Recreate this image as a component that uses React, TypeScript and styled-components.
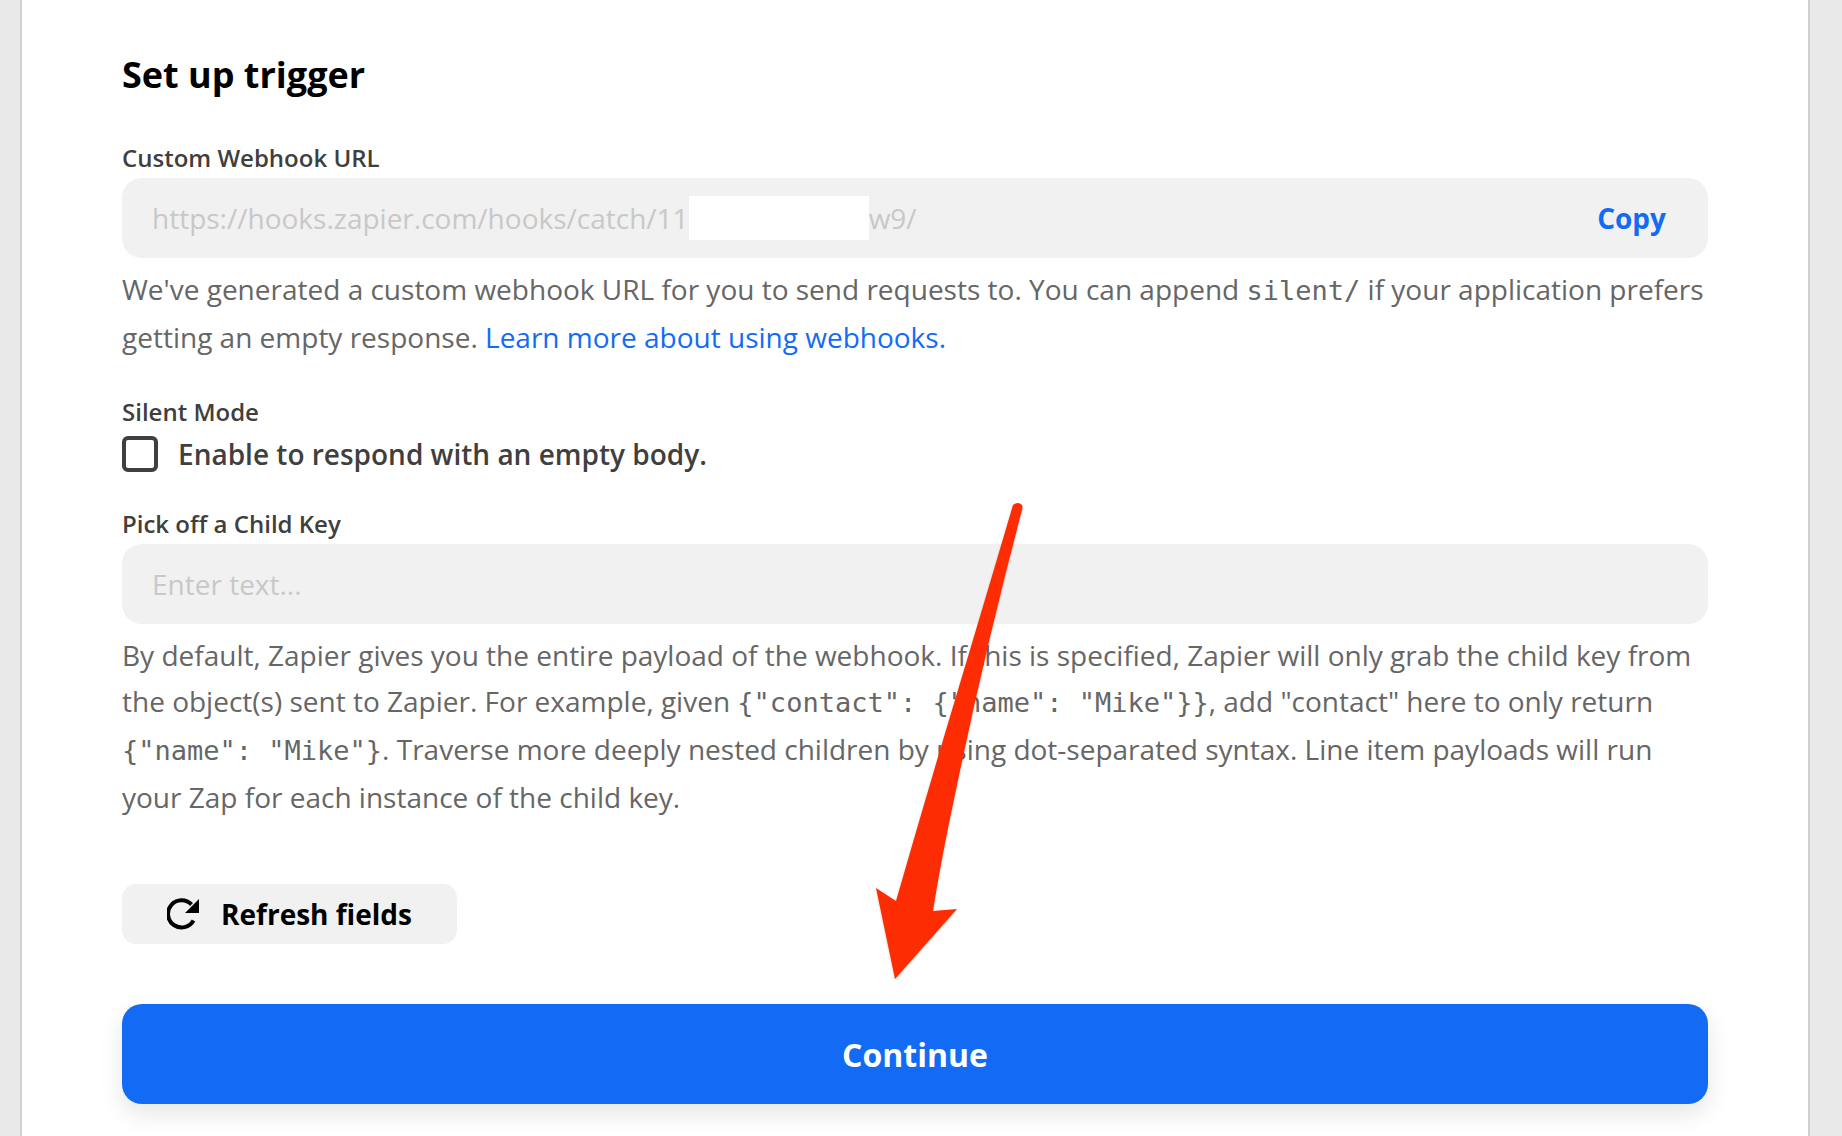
import React from "react";
import styled, { createGlobalStyle } from "styled-components";

const Global = createGlobalStyle`
  html, body { margin: 0; padding: 0; height: 100%; overflow: hidden; background: #e9e9e9; }
  body { font-family: "Open Sans", "Liberation Sans", sans-serif; }
  * { box-sizing: border-box; }
`;

const Page = styled.div`
  position: relative;
  height: 1136px;
  padding: 0 32px 0 20px;
  overflow: hidden;
`;

const Panel = styled.main`
  height: 1136px;
  background: #fff;
  border-left: 2px solid #d0d0d0;
  border-right: 2px solid #d0d0d0;
  padding: 50px 100px 0 100px;
  display: flex;
  flex-direction: column;
`;

const Heading = styled.h1`
  margin: 0 0 42px;
  font-size: 36px;
  line-height: 50px;
  font-weight: 700;
  color: #000;
`;

const Label = styled.div`
  font-size: 24px;
  line-height: 32px;
  font-weight: 600;
  color: #403f3e;
`;

const Field = styled.div`
  display: flex;
  align-items: center;
  justify-content: space-between;
  height: 80px;
  margin-top: 4px;
  padding: 0 42px 0 30px;
  background: #f1f1f1;
  border-radius: 20px;
`;

const FieldText = styled.div`
  display: flex;
  align-items: center;
  font-size: 28px;
  color: #c8c8c8;
`;

const Redaction = styled.span`
  display: block;
  width: 180px;
  height: 44px;
  background: #fff;
`;

const CopyLink = styled.span`
  font-size: 28px;
  font-weight: 700;
  color: #136bf5;
`;

const Help = styled.p`
  margin: 8px 0 0;
  font-size: 28px;
  line-height: 46px;
  color: #666;
`;

const Code = styled.code`
  font-family: "DejaVu Sans Mono", "Liberation Mono", monospace;
  font-size: 27px;
`;

const HelpLink = styled.a`
  color: #136bf5;
`;

const Section = styled.div<{ $top: number }>`
  margin-top: ${(p) => p.$top}px;
`;

const CheckRow = styled.label`
  display: flex;
  align-items: center;
  gap: 20px;
  margin-top: 8px;
  font-size: 28px;
  line-height: 36px;
  font-weight: 600;
  color: #403f3e;
`;

const Box = styled.span`
  display: block;
  width: 36px;
  height: 36px;
  border: 4px solid #403f3e;
  border-radius: 6px;
`;

const RefreshButton = styled.button`
  display: flex;
  align-items: center;
  justify-content: center;
  gap: 22px;
  width: 335px;
  height: 60px;
  margin-top: 64px;
  padding: 0;
  border: 0;
  border-radius: 14px;
  background: #f1f1f1;
  font: 700 28px "Open Sans", sans-serif;
  color: #000;
`;

const ContinueButton = styled.button`
  display: block;
  width: 100%;
  height: 100px;
  margin-top: 60px;
  flex-shrink: 0;
  border: 0;
  border-radius: 20px;
  background: #136bf5;
  box-shadow: 0 10px 24px rgba(0, 0, 0, 0.1);
  font: 700 32px "Open Sans", sans-serif;
  color: #fff;
`;

const ArrowOverlay = styled.svg`
  position: absolute;
  left: 870px;
  top: 498px;
  width: 160px;
  height: 490px;
  pointer-events: none;
  filter: drop-shadow(0 1px 1px rgba(0, 0, 0, 0.2));
`;

function RefreshIcon() {
  return (
    <svg width="32" height="32" viewBox="0 0 32 32" fill="none">
      <path d="M26.5 22.5A13.6 13.6 0 1 1 24.5 6.5" stroke="#000" strokeWidth="4" />
      <path d="M32 1V15H18Z" fill="#000" />
    </svg>
  );
}

export default function App() {
  return (
    <Page>
      <Global />
      <Panel>
        <Heading>Set up trigger</Heading>
        <Label>Custom Webhook URL</Label>
        <Field>
          <FieldText>
            https://hooks.zapier.com/hooks/catch/11
            <Redaction />
            w9/
          </FieldText>
          <CopyLink>Copy</CopyLink>
        </Field>
        <Help>
          We've generated a custom webhook URL for you to send requests to. You can append{" "}
          <Code>silent/</Code> if your application prefers getting an empty response.{" "}
          <HelpLink>Learn more about using webhooks.</HelpLink>
        </Help>
        <Section $top={36}>
          <Label>Silent Mode</Label>
          <CheckRow>
            <Box />
            Enable to respond with an empty body.
          </CheckRow>
        </Section>
        <Section $top={36}>
          <Label>Pick off a Child Key</Label>
          <Field>
            <FieldText>Enter text...</FieldText>
          </Field>
        </Section>
        <Help>
          By default, Zapier gives you the entire payload of the webhook. If this is specified, Zapier
          will only grab the child key from the object(s) sent to Zapier. For example, given{" "}
          <Code>{'{"contact": {"name": "Mike"}}'}</Code>, add "contact" here to only return{" "}
          <Code>{'{"name": "Mike"}'}</Code>. Traverse more deeply nested children by using
          dot-separated syntax. Line item payloads will run your Zap for each instance of the child key.
        </Help>
        <RefreshButton>
          <RefreshIcon />
          Refresh fields
        </RefreshButton>
        <ContinueButton>Continue</ContinueButton>
      </Panel>
      <ArrowOverlay viewBox="870 498 160 490">
        <path
          d="M1013 505Q1018 501 1022 505Q1023 507 1022 510Q985 650 956 790Q941 860 933 911L957 909L895 979L876 888L896 901Q925 800 955 700Q985 600 1013 505Z"
          fill="#fe2c02"
        />
      </ArrowOverlay>
    </Page>
  );
}
